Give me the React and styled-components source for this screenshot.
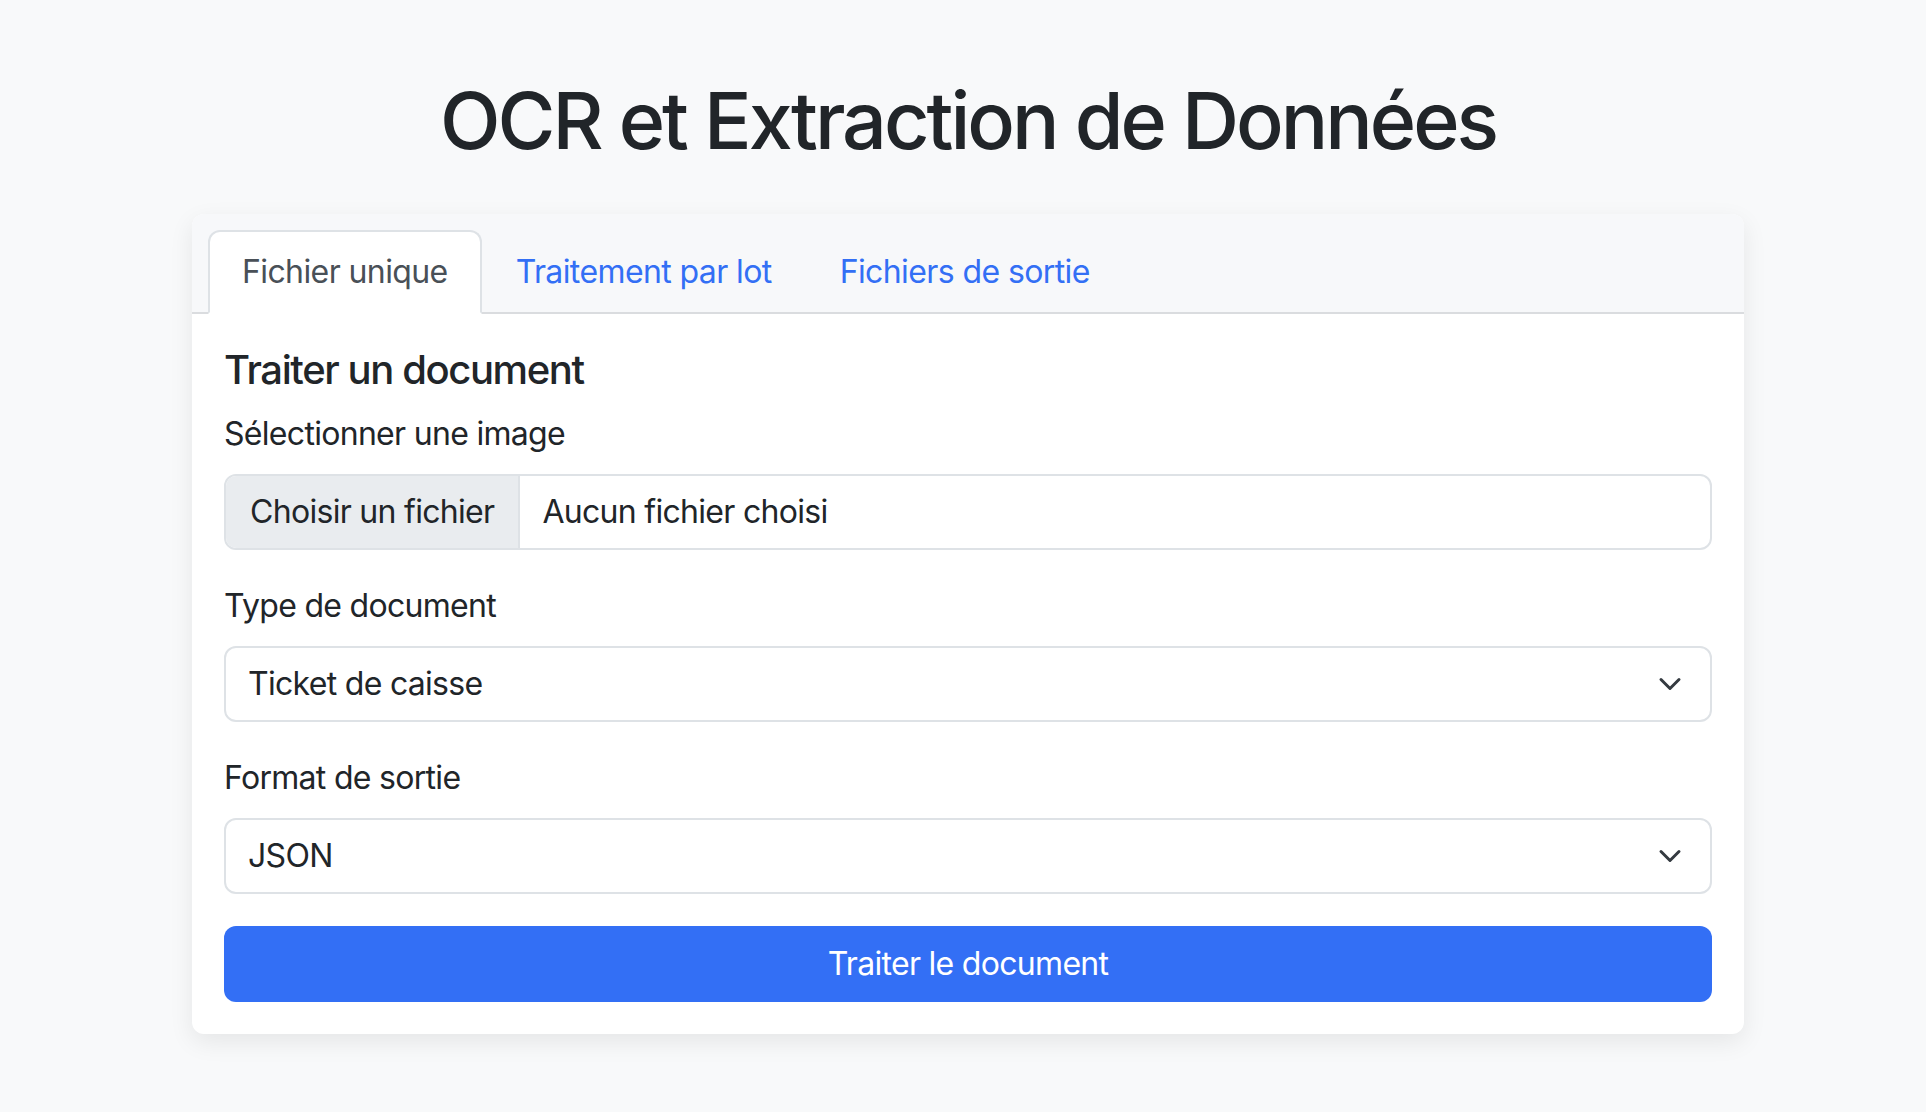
import React, { useState } from 'react';
import styled, { createGlobalStyle } from 'styled-components';

const GlobalStyle = createGlobalStyle`
  html, body {
    margin: 0;
    padding: 0;
    background: #f8f9fa;
  }
  body {
    font-family: 'Inter', 'Noto Sans', sans-serif;
    font-size: 32px;
    line-height: 1.5;
    color: #212529;
  }
  * {
    box-sizing: border-box;
  }
`;

const Page = styled.div`
  min-height: 1112px;
  padding: 72px 0 0 10px;
`;

const Container = styled.div`
  width: 1552px;
  margin: 0 auto;
`;

const Title = styled.h1`
  margin: 0 0 46px;
  font-size: 79px;
  font-weight: 500;
  line-height: 96px;
  text-align: center;
  letter-spacing: -3px;
`;

const Card = styled.div`
  background: #fff;
  border-radius: 12px;
  box-shadow: 0 8px 24px rgba(0, 0, 0, 0.08);
  overflow: hidden;
`;

const CardHeader = styled.div`
  background: #f7f8fa;
  padding: 16px 32px 0;
  border-bottom: 2px solid #dadcdf;
`;

const Tabs = styled.ul`
  display: flex;
  list-style: none;
  margin: 0 -16px -2px;
  padding: 0;
`;

const Tab = styled.li`
  padding: 16px 32px;
  border: 2px solid ${p => (p.$active ? '#dee2e6' : 'transparent')};
  border-bottom-color: ${p => (p.$active ? '#fff' : 'transparent')};
  border-radius: 12px 12px 0 0;
  background: ${p => (p.$active ? '#fff' : 'transparent')};
  color: ${p => (p.$active ? '#495057' : '#336ff5')};
  line-height: 48px;
  letter-spacing: -0.6px;
  cursor: pointer;
`;

const CardBody = styled.div`
  padding: 32px;
`;

const CardTitle = styled.h5`
  margin: 0 0 16px;
  font-size: 40px;
  font-weight: 500;
  line-height: 48px;
  letter-spacing: -1.4px;
`;

const Field = styled.div`
  margin-bottom: 32px;
`;

const Label = styled.label`
  display: block;
  margin-bottom: 16px;
  line-height: 48px;
  letter-spacing: -0.7px;
`;

const FileBox = styled.div`
  display: flex;
  height: 76px;
  border: 2px solid #dee2e6;
  border-radius: 12px;
  overflow: hidden;
  background: #fff;
`;

const FileButton = styled.span`
  display: flex;
  align-items: center;
  padding: 0 24px;
  background: #e9ecef;
  border-right: 2px solid #dee2e6;
  letter-spacing: -0.7px;
`;

const FileName = styled.span`
  display: flex;
  align-items: center;
  padding: 0 22px;
  letter-spacing: -0.7px;
`;

const SelectWrap = styled.div`
  position: relative;
`;

const Select = styled.select`
  display: block;
  width: 100%;
  height: 76px;
  padding: 0 72px 0 22px;
  border: 2px solid #dee2e6;
  border-radius: 12px;
  background: #fff;
  font: inherit;
  color: #212529;
  letter-spacing: -0.7px;
  appearance: none;
  outline: none;
`;

const Chevron = styled.svg`
  position: absolute;
  right: 26px;
  top: 26px;
  width: 32px;
  height: 24px;
  pointer-events: none;
`;

const SubmitButton = styled.button`
  display: block;
  width: 100%;
  height: 76px;
  border: none;
  border-radius: 12px;
  background: #336ff5;
  color: #fff;
  font: inherit;
  letter-spacing: -0.7px;
  cursor: pointer;
`;

const SelectField = ({ label, value, options }) => (
  <Field>
    <Label>{label}</Label>
    <SelectWrap>
      <Select defaultValue={value}>
        {options.map(o => (
          <option key={o}>{o}</option>
        ))}
      </Select>
      <Chevron viewBox="0 0 16 16">
        <path d="m2 5 6 6 6-6" fill="none" stroke="#343a40" strokeWidth="2" strokeLinecap="round" strokeLinejoin="round" />
      </Chevron>
    </SelectWrap>
  </Field>
);

const tabs = ['Fichier unique', 'Traitement par lot', 'Fichiers de sortie'];

export default function App() {
  const [active, setActive] = useState(0);

  return (
    <Page>
      <GlobalStyle />
      <Container>
        <Title>OCR et Extraction de Données</Title>
        <Card>
          <CardHeader>
            <Tabs>
              {tabs.map((t, i) => (
                <Tab key={t} $active={i === active} onClick={() => setActive(i)}>
                  {t}
                </Tab>
              ))}
            </Tabs>
          </CardHeader>
          <CardBody>
            <CardTitle>Traiter un document</CardTitle>
            <Field>
              <Label>Sélectionner une image</Label>
              <FileBox>
                <FileButton>Choisir un fichier</FileButton>
                <FileName>Aucun fichier choisi</FileName>
              </FileBox>
            </Field>
            <SelectField
              label="Type de document"
              value="Ticket de caisse"
              options={['Ticket de caisse', 'Facture', 'Autre']}
            />
            <SelectField label="Format de sortie" value="JSON" options={['JSON', 'CSV', 'XML']} />
            <SubmitButton>Traiter le document</SubmitButton>
          </CardBody>
        </Card>
      </Container>
    </Page>
  );
}
